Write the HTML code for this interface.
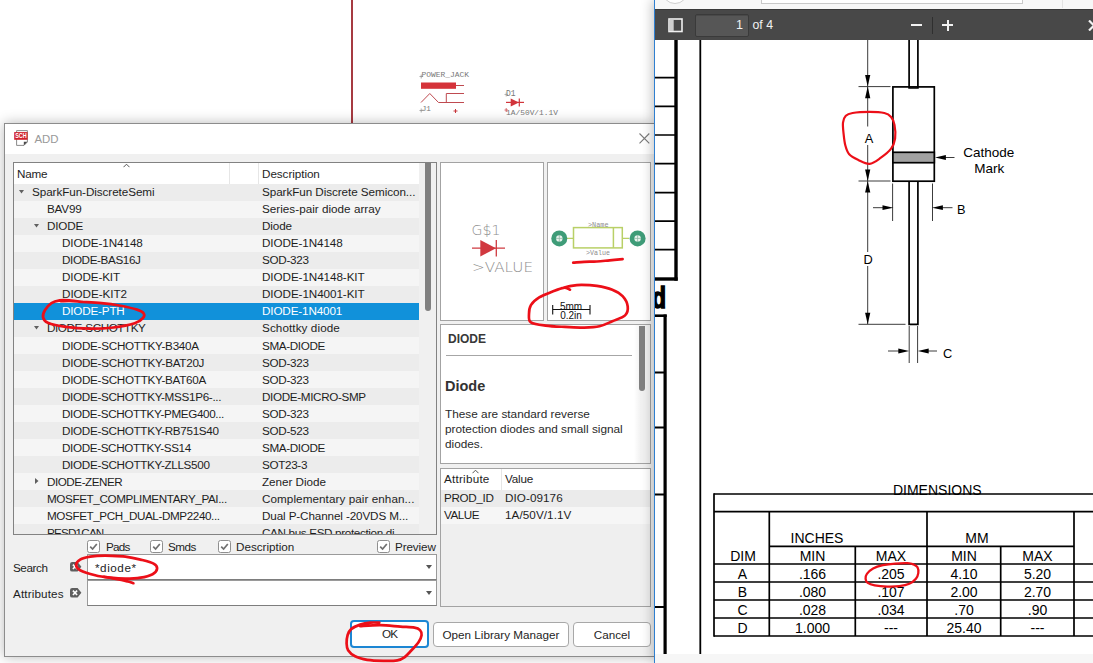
<!DOCTYPE html>
<html lang="en"><head><meta charset="utf-8"><title>ADD</title>
<style>
html,body{margin:0;padding:0}
body{width:1093px;height:663px;overflow:hidden;position:relative;background:#fff;font-family:"Liberation Sans",sans-serif;font-size:11.7px;color:#1e1e1e}
.abs{position:absolute}
#sch{position:absolute;left:0;top:0;width:655px;height:663px;background:#fff}
#pdf{position:absolute;left:654px;top:0;width:439px;height:663px;background:#fff;border-left:1px solid #2f7fd0;box-shadow:-2px 0 11px rgba(0,0,0,.24);overflow:hidden}
#pdftop{position:absolute;left:0;top:0;width:439px;height:9px;background:#f7f7f7}
#pdfbar{position:absolute;left:0;top:9px;width:439px;height:31px;background:#484848;border-top:1px solid #3a3a3a;box-sizing:border-box;color:#f0f0f0;font-size:13px}
#pdfbot{position:absolute;left:0;top:654px;width:439px;height:9px;background:#f6f6f6}
#dlg{position:absolute;left:4px;top:123px;width:650px;height:534px;background:#f0f0f0;border:1px solid #8c8c8c;border-right:none;box-sizing:border-box;box-shadow:0 0 12px rgba(0,0,0,.28)}
#title{position:absolute;left:0;top:0;width:650px;height:30px;background:#fff}
#tree{position:absolute;left:8px;top:38px;width:424px;height:373px;border:1px solid #828282;box-sizing:border-box;background:#f0f0f0;overflow:hidden}
#thead{position:absolute;left:0;top:0;width:405px;height:21px;background:#fff}
.row{position:absolute;left:0;width:405px;height:17px;line-height:17px;white-space:nowrap}
.row.a{background:#ececec} .row.b{background:#f5f5f5}
.row.sel{background:#1191da;color:#fff}
.row span{position:absolute;top:0}
.row.u span{top:-1px}
.c2{left:248px}
.arw{position:absolute}
.box{position:absolute;background:#fff;border:1px solid #a3a3a3;box-sizing:border-box}
.cb{position:absolute;width:13px;height:13px;box-sizing:border-box;border:1px solid #8f8f8f;border-radius:2.5px;background:#fff}
.cb svg{position:absolute;left:1px;top:1px}
.lbl{position:absolute;white-space:nowrap;line-height:14px}
.inp{position:absolute;background:#fff;border:1px solid #9a9a9a;border-bottom-color:#7d7d7d;box-sizing:border-box}
.btn{position:absolute;box-sizing:border-box;background:#fff;border:1px solid #a8a8a8;border-radius:4px;text-align:center;line-height:23px;height:25px}
.clr{position:absolute;width:11px;height:10px;background:#5f5f5f;border-radius:2.5px}
.pt{position:absolute;font-family:"Liberation Sans",sans-serif;font-size:13px;color:#000;white-space:nowrap;line-height:14px}
</style></head><body>

<!-- ===== schematic editor background ===== -->
<div id="sch">
 <div class="abs" style="left:351px;top:0;width:2px;height:124px;background:#a63a41"></div>
 <svg class="abs" style="left:410px;top:62px" width="160" height="62" viewBox="410 62 160 62">
  <g font-family="'Liberation Mono',monospace" fill="#787878">
   <text x="421.5" y="77" font-size="7.9" textLength="47.5" lengthAdjust="spacingAndGlyphs">POWER_JACK</text>
   <text x="421.7" y="111" font-size="7.6">J1</text>
   <text x="506" y="95.6" font-size="8.2" textLength="9.6" lengthAdjust="spacingAndGlyphs">D1</text>
   <text x="506" y="114.7" font-size="7.9" textLength="52" lengthAdjust="spacingAndGlyphs">1A/50V/1.1V</text>
  </g>
  <rect x="421" y="82.5" width="35" height="6.3" fill="#d5333a"/>
  <g stroke="#bf4a50" stroke-width="1" fill="none">
   <path d="M456 85.5H464"/>
   <path d="M421 102.5L429.8 93.5L438.5 102.5H464"/>
   <path d="M464 93.5H446.3V102.5"/>
   <path d="M453.5 111H457.5M455.5 109V113" stroke="#c8373c"/>
   <path d="M419.5 110.5H423M421.2 108.5V112.5M419.5 76.5H423M421.2 74.5V78.5" stroke="#888" stroke-width=".7"/>
   <path d="M504.5 94.5H508M506.2 92.5V96.5" stroke="#999" stroke-width=".7"/>
   <path d="M504.5 110H508M506.2 108V112" stroke="#c8373c" stroke-width=".7"/>
  </g>
  <g stroke="#d1343b" stroke-width="1.2">
   <path d="M506 102.4H524"/>
   <path d="M519.3 98.4V106.4"/>
  </g>
  <path d="M510.7 98.4V106.4L519 102.4Z" fill="#d1343b"/>
 </svg>
</div>

<!-- ===== ADD dialog ===== -->
<div id="dlg">
 <div id="title">
  <svg class="abs" style="left:9px;top:6px" width="16" height="17" viewBox="0 0 16 17">
   <path d="M2.6 .6H13.4V12L10 15.4H2.6Z" fill="#fff" stroke="#7d7d7d" stroke-width=".9"/>
   <path d="M9.8 15.4L13.4 11.8H9.8Z" fill="#4a4a4a"/>
   <rect x="0.2" y="2.1" width="13.4" height="7.7" fill="#d0212b"/>
   <text x="6.9" y="8.4" font-family="'Liberation Sans',sans-serif" font-size="6.6" font-weight="bold" fill="#fff" text-anchor="middle" textLength="11.5" lengthAdjust="spacingAndGlyphs">SCH</text>
  </svg>
  <span class="lbl" style="left:29.5px;top:6.5px;font-size:11.4px;color:#999;line-height:16px">ADD</span>
  <svg class="abs" style="left:634px;top:9px" width="11" height="11" viewBox="0 0 11 11"><path d="M.5 .5L10.3 10.3M10.3 .5L.5 10.3" stroke="#7a7a7a" stroke-width="1.1" fill="none"/></svg>
 </div>

 <div id="tree">
  <div id="thead">
   <span class="lbl" style="left:3px;top:4px;letter-spacing:-0.197px">Name</span>
   <span class="lbl" style="left:248px;top:4px;letter-spacing:-0.061px">Description</span>
   <div class="abs" style="left:215px;top:0;width:1px;height:21px;background:#e6e6e6"></div>
   <div class="abs" style="left:244px;top:0;width:1px;height:21px;background:#e6e6e6"></div>
   <svg class="abs" style="left:109px;top:0px" width="7" height="5" viewBox="0 0 7 5"><path d="M.5 4.2L3.5 1.2L6.5 4.2" stroke="#555" stroke-width="1" fill="none"/></svg>
  </div>
<div class="row a u" style="top:21px"><svg class="arw" style="left:5px;top:6px" width="5" height="4" viewBox="0 0 5 4"><path d="M0 0H5L2.5 3.5Z" fill="#606060"/></svg><span class="c1" style="left:18px;letter-spacing:-0.074px">SparkFun-DiscreteSemi</span><span class="c2" style="letter-spacing:-0.066px">SparkFun Discrete Semicon...</span></div>
<div class="row b u" style="top:38px"><span class="c1" style="left:33px;letter-spacing:-0.206px">BAV99</span><span class="c2" style="letter-spacing:0.016px">Series-pair diode array</span></div>
<div class="row a u" style="top:55px"><svg class="arw" style="left:20px;top:6px" width="5" height="4" viewBox="0 0 5 4"><path d="M0 0H5L2.5 3.5Z" fill="#606060"/></svg><span class="c1" style="left:33px;letter-spacing:-0.183px">DIODE</span><span class="c2" style="letter-spacing:-0.129px">Diode</span></div>
<div class="row b u" style="top:72px"><span class="c1" style="left:48px;letter-spacing:-0.097px">DIODE-1N4148</span><span class="c2" style="letter-spacing:-0.105px">DIODE-1N4148</span></div>
<div class="row a u" style="top:89px"><span class="c1" style="left:48px;letter-spacing:-0.387px">DIODE-BAS16J</span><span class="c2" style="letter-spacing:-0.276px">SOD-323</span></div>
<div class="row b u" style="top:106px"><span class="c1" style="left:48px;letter-spacing:-0.122px">DIODE-KIT</span><span class="c2" style="letter-spacing:-0.083px">DIODE-1N4148-KIT</span></div>
<div class="row a u" style="top:123px"><span class="c1" style="left:48px;letter-spacing:-0.059px">DIODE-KIT2</span><span class="c2" style="letter-spacing:-0.083px">DIODE-1N4001-KIT</span></div>
<div class="row sel u" style="top:140px"><span class="c1" style="left:48px;letter-spacing:-0.187px">DIODE-PTH</span><span class="c2" style="letter-spacing:-0.147px">DIODE-1N4001</span></div>
<div class="row a u" style="top:157px"><svg class="arw" style="left:20px;top:6px" width="5" height="4" viewBox="0 0 5 4"><path d="M0 0H5L2.5 3.5Z" fill="#606060"/></svg><span class="c1" style="left:33px;letter-spacing:-0.439px">DIODE-SCHOTTKY</span><span class="c2" style="letter-spacing:0.088px">Schottky diode</span></div>
<div class="row b" style="top:174px"><span class="c1" style="left:48px;letter-spacing:-0.283px">DIODE-SCHOTTKY-B340A</span><span class="c2" style="letter-spacing:-0.359px">SMA-DIODE</span></div>
<div class="row a" style="top:191px"><span class="c1" style="left:48px;letter-spacing:-0.280px">DIODE-SCHOTTKY-BAT20J</span><span class="c2" style="letter-spacing:-0.276px">SOD-323</span></div>
<div class="row b" style="top:208px"><span class="c1" style="left:48px;letter-spacing:-0.287px">DIODE-SCHOTTKY-BAT60A</span><span class="c2" style="letter-spacing:-0.276px">SOD-323</span></div>
<div class="row a" style="top:225px"><span class="c1" style="left:48px;letter-spacing:-0.317px">DIODE-SCHOTTKY-MSS1P6-...</span><span class="c2" style="letter-spacing:-0.353px">DIODE-MICRO-SMP</span></div>
<div class="row b" style="top:242px"><span class="c1" style="left:48px;letter-spacing:-0.361px">DIODE-SCHOTTKY-PMEG400...</span><span class="c2" style="letter-spacing:-0.276px">SOD-323</span></div>
<div class="row a" style="top:259px"><span class="c1" style="left:48px;letter-spacing:-0.313px">DIODE-SCHOTTKY-RB751S40</span><span class="c2" style="letter-spacing:-0.276px">SOD-523</span></div>
<div class="row b" style="top:276px"><span class="c1" style="left:48px;letter-spacing:-0.376px">DIODE-SCHOTTKY-SS14</span><span class="c2" style="letter-spacing:-0.359px">SMA-DIODE</span></div>
<div class="row a" style="top:293px"><span class="c1" style="left:48px;letter-spacing:-0.327px">DIODE-SCHOTTKY-ZLLS500</span><span class="c2" style="letter-spacing:-0.332px">SOT23-3</span></div>
<div class="row b" style="top:310px"><svg class="arw" style="left:21px;top:5px" width="4" height="6" viewBox="0 0 4 6"><path d="M0 0V6L3.5 3Z" fill="#606060"/></svg><span class="c1" style="left:33px;letter-spacing:-0.476px">DIODE-ZENER</span><span class="c2" style="letter-spacing:-0.030px">Zener Diode</span></div>
<div class="row a" style="top:327px"><span class="c1" style="left:33px;letter-spacing:-0.388px">MOSFET_COMPLIMENTARY_PAI...</span><span class="c2" style="letter-spacing:0.066px">Complementary pair enhan...</span></div>
<div class="row b" style="top:344px"><span class="c1" style="left:33px;letter-spacing:-0.406px">MOSFET_PCH_DUAL-DMP2240...</span><span class="c2" style="letter-spacing:-0.123px">Dual P-Channel -20VDS M...</span></div>
<div class="row a" style="top:361px"><span class="c1" style="left:33px;letter-spacing:-0.814px">PESD1CAN</span><span class="c2" style="letter-spacing:-0.351px">CAN bus ESD protection di...</span></div>
  <div class="abs" style="left:411px;top:0;width:6px;height:148px;background:#808080;border-radius:0 0 3px 3px"></div>
 </div>

 <!-- previews -->
 <div class="box" style="left:435px;top:38px;width:104px;height:159px">
  <svg class="abs" style="left:0;top:0" width="102" height="157" viewBox="441 163 102 157">
   <g font-family="'DejaVu Sans Light','DejaVu Sans','Liberation Sans',sans-serif" font-weight="200" fill="#8e8e8e">
    <text x="471.5" y="234.7" font-size="14.6" textLength="29" lengthAdjust="spacingAndGlyphs">G$1</text>
    <text x="472" y="272.4" font-size="14.2" textLength="61" lengthAdjust="spacingAndGlyphs">&gt;VALUE</text>
   </g>
   <path d="M472 248.2H505M496.3 240V256.5" stroke="#cf3b41" stroke-width="1.3" fill="none"/>
   <path d="M480.3 240V256.5L496 248.2Z" fill="#d1383f"/>
  </svg>
 </div>
 <div class="box" style="left:542px;top:38px;width:103.5px;height:159px">
  <svg class="abs" style="left:0;top:0" width="102" height="157" viewBox="548 163 102 157">
   <path d="M567 238.4H573.5M622.3 238.4H629" stroke="#b9d067" stroke-width="1.4"/>
   <rect x="573.5" y="227.6" width="48.8" height="20.3" fill="none" stroke="#b9d067" stroke-width="1.5"/>
   <path d="M613.4 227.6V247.9" stroke="#b9d067" stroke-width="1.5"/>
   <circle cx="559.3" cy="238.4" r="8" fill="#3f9c78"/><circle cx="559.3" cy="238.4" r="3.2" fill="#e9f3ee"/>
   <path d="M555.8 238.4H562.8M559.3 234.9V241.9" stroke="#8fb7a5" stroke-width=".8"/>
   <circle cx="637.6" cy="238.4" r="8" fill="#3f9c78"/><circle cx="637.6" cy="238.4" r="3.2" fill="#e9f3ee"/>
   <path d="M634.1 238.4H641.1M637.6 234.9V241.9" stroke="#8fb7a5" stroke-width=".8"/>
   <g font-family="'Liberation Mono',monospace" fill="#8d8d8d">
    <text x="588" y="226.6" font-size="6.6" textLength="20.5" lengthAdjust="spacingAndGlyphs">&gt;Name</text>
    <text x="586" y="254.7" font-size="6.6" textLength="24" lengthAdjust="spacingAndGlyphs">&gt;Value</text>
   </g>
   <path d="M552.7 309.5H590M552.7 305V314.6M590 305V314.6" stroke="#111" stroke-width="1.1" fill="none"/>
   <g font-family="'Liberation Sans',sans-serif" fill="#111" font-size="10" text-anchor="middle">
    <text x="571" y="309.9">5mm</text>
    <text x="571" y="318.7">0.2in</text>
   </g>
  </svg>
 </div>

 <!-- description -->
 <div class="box" style="left:435px;top:200px;width:211px;height:140px;overflow:hidden">
  <div class="abs" style="left:193px;top:0;width:17px;height:138px;background:linear-gradient(90deg,#fff,#f1f1f1 40%,#f1f1f1)"></div>
  <div class="abs" style="left:198px;top:1px;width:6px;height:65px;background:#808080;border-radius:0 0 3px 3px"></div>
  <span class="lbl" style="left:7px;top:7px;font-weight:bold;font-size:12px;color:#383838">DIODE</span>
  <div class="abs" style="left:5px;top:30px;width:186px;height:1px;background:#a6a6a6"></div>
  <span class="lbl" style="left:4px;top:53px;font-weight:bold;font-size:14.5px;color:#333;line-height:16px">Diode</span>
  <div class="abs" style="left:4px;top:82px;width:190px;line-height:15px;font-size:11.8px;color:#2a2a2a">These are standard reverse<br>protection diodes and small signal<br>diodes.</div>
 </div>

 <!-- attributes -->
 <div class="box" style="left:435px;top:344px;width:211px;height:139px;background:#efefef;overflow:hidden">
  <div class="abs" style="left:0;top:0;width:210px;height:21px;background:#fff"></div>
  <div class="abs" style="left:60px;top:0;width:1px;height:21px;background:#e6e6e6"></div>
  <svg class="abs" style="left:31px;top:0px" width="7" height="5" viewBox="0 0 7 5"><path d="M.5 4.2L3.5 1.2L6.5 4.2" stroke="#555" stroke-width="1" fill="none"/></svg>
  <span class="lbl" style="left:3px;top:3px;letter-spacing:0.230px">Attribute</span>
  <span class="lbl" style="left:64px;top:3px;letter-spacing:-0.166px">Value</span>
  <div class="abs" style="left:0;top:21px;width:210px;height:17px;background:#ebebeb"></div>
  <div class="abs" style="left:0;top:38px;width:210px;height:17px;background:#f6f6f6"></div>
  <span class="lbl" style="left:3px;top:22px;letter-spacing:-0.353px">PROD_ID</span>
  <span class="lbl" style="left:64px;top:22px;letter-spacing:0.059px">DIO-09176</span>
  <span class="lbl" style="left:3px;top:39px;letter-spacing:-0.494px">VALUE</span>
  <span class="lbl" style="left:64px;top:39px;letter-spacing:0.069px">1A/50V/1.1V</span>
 </div>

 <!-- checkboxes -->
 <div class="cb" style="left:82px;top:416px"><svg width="9" height="9" viewBox="0 0 9 9"><path d="M1.2 4.6L3.6 7L7.8 2" stroke="#707070" stroke-width="1.7" fill="none"/></svg></div>
 <span class="lbl" style="left:101px;top:416px;letter-spacing:-0.735px">Pads</span>
 <div class="cb" style="left:145px;top:416px"><svg width="9" height="9" viewBox="0 0 9 9"><path d="M1.2 4.6L3.6 7L7.8 2" stroke="#707070" stroke-width="1.7" fill="none"/></svg></div>
 <span class="lbl" style="left:163px;top:416px;letter-spacing:-0.473px">Smds</span>
 <div class="cb" style="left:213px;top:416px"><svg width="9" height="9" viewBox="0 0 9 9"><path d="M1.2 4.6L3.6 7L7.8 2" stroke="#707070" stroke-width="1.7" fill="none"/></svg></div>
 <span class="lbl" style="left:231px;top:416px;letter-spacing:-0.015px">Description</span>
 <div class="cb" style="left:372px;top:416px"><svg width="9" height="9" viewBox="0 0 9 9"><path d="M1.2 4.6L3.6 7L7.8 2" stroke="#707070" stroke-width="1.7" fill="none"/></svg></div>
 <span class="lbl" style="left:390px;top:416px;letter-spacing:-0.125px">Preview</span>

 <!-- search / attributes -->
 <span class="lbl" style="left:8px;top:437px;letter-spacing:-0.424px">Search</span>
 <svg class="abs" style="left:65px;top:438px" width="12" height="10" viewBox="0 0 12 10"><path d="M2.2 0H7.6L11.4 4.7L7.6 9.6H2.2Q0 9.6 0 7.4V2.2Q0 0 2.2 0Z" fill="#5e5e5e"/><path d="M2.9 2.6L7.1 7M7.1 2.6L2.9 7" stroke="#fff" stroke-width="1.6"/></svg>
 <div class="inp" style="left:82px;top:430px;width:350px;height:26px">
  <span class="lbl" style="left:7px;top:6px;letter-spacing:0.557px">*diode*</span>
  <svg class="abs" style="left:338px;top:10px" width="6" height="4" viewBox="0 0 6 4"><path d="M0 0H6L3 4Z" fill="#555"/></svg>
 </div>
 <span class="lbl" style="left:8px;top:463px;letter-spacing:0.133px">Attributes</span>
 <svg class="abs" style="left:65px;top:464px" width="12" height="10" viewBox="0 0 12 10"><path d="M2.2 0H7.6L11.4 4.7L7.6 9.6H2.2Q0 9.6 0 7.4V2.2Q0 0 2.2 0Z" fill="#5e5e5e"/><path d="M2.9 2.6L7.1 7M7.1 2.6L2.9 7" stroke="#fff" stroke-width="1.6"/></svg>
 <div class="inp" style="left:82px;top:456px;width:350px;height:26px">
  <svg class="abs" style="left:338px;top:10px" width="6" height="4" viewBox="0 0 6 4"><path d="M0 0H6L3 4Z" fill="#555"/></svg>
 </div>

 <!-- buttons -->
 <div class="btn" style="left:345px;top:496px;width:79px;height:27.5px;border:2px solid #1c86d3;line-height:23px;border-radius:4px"><span style="letter-spacing:-0.845px">OK</span></div>
 <div class="btn" style="left:428px;top:498px;width:136px">Open Library Manager</div>
 <div class="btn" style="left:568px;top:498px;width:78px">Cancel</div>
</div>

<!-- ===== PDF viewer window ===== -->
<div id="pdf">
 <div id="pdftop">
  <div class="abs" style="left:7px;top:-22px;width:26px;height:26px;border:1px solid #cfcfcf;border-radius:50%;box-sizing:border-box;background:#fff"></div>
  <div class="abs" style="left:106px;top:-10px;width:260px;height:12px;border:1px solid #c9c9c9;background:#fff"></div>
  <div class="abs" style="left:407px;top:0;width:1px;height:8px;background:#e3e3e3"></div>
 </div>
 <div id="pdfbar">
  <svg class="abs" style="left:13px;top:8px" width="15" height="15" viewBox="0 0 15 15"><rect x="1" y="1" width="13" height="12.5" fill="none" stroke="#f0f0f0" stroke-width="1.6"/><rect x="1.5" y="1.5" width="4.2" height="11.5" fill="#cfcfcf"/></svg>
  <div class="abs" style="left:40px;top:4px;width:54px;height:23px;box-sizing:border-box;border:1px solid #3a3a3a;background:#565656;border-radius:2px;box-shadow:inset 0 1px 0 rgba(0,0,0,.15)"></div>
  <span class="lbl" style="left:81px;top:8px;font-size:12.6px;color:#f2f2f2">1</span>
  <span class="lbl" style="left:97.5px;top:8px;font-size:12.3px;color:#f2f2f2">of 4</span>
  <div class="abs" style="left:256px;top:14px;width:11px;height:2px;background:#f2f2f2"></div>
  <div class="abs" style="left:277px;top:7px;width:1px;height:17px;background:#2f2f2f"></div>
  <div class="abs" style="left:287px;top:14px;width:11px;height:2px;background:#f2f2f2"></div>
  <div class="abs" style="left:291.5px;top:9.5px;width:2px;height:11px;background:#f2f2f2"></div>
  <svg class="abs" style="left:433px;top:10px" width="12" height="11" viewBox="0 0 12 11"><path d="M1 .5L11 10.5M11 .5L1 10.5" stroke="#f2f2f2" stroke-width="2.2" fill="none"/></svg>
 </div>

 <!-- page content -->
 <svg class="abs" style="left:0;top:40px" width="439" height="614" viewBox="655 40 439 614">
  <g stroke="#000" fill="none">
   <!-- left title-block ladder -->
   <path d="M676 40V280.7" stroke-width="3.4"/>
   <path d="M655 77.7H677M655 106.3H677M655 135H677M655 163.6H677M655 192.6H677M655 221.2H677M655 249.6H677" stroke-width="1.7"/>
   <path d="M655 279H677.7" stroke-width="3.4"/>
   <path d="M655 315.7H666.7" stroke-width="2.6"/>
   <path d="M665.1 314.4V654" stroke-width="3.2"/>
   <path d="M655 372.5H666M655 427.5H666M655 494.5H666M655 607H666" stroke-width="2"/>
   <path d="M700.3 40V654" stroke-width="1.8"/>
  </g>
  <text transform="translate(652.1,308) scale(0.78,1)" font-family="'Liberation Sans',sans-serif" font-weight="bold" font-size="29.4" fill="#000" stroke="#000" stroke-width="1.5">d</text>

  <!-- diode drawing -->
  <g stroke="#000" fill="none" stroke-width="1.7">
   <path d="M909.1 40V88H917.9V40"/>
   <rect x="892.9" y="86.9" width="41.4" height="94.3" fill="none"/>
   <rect x="892.9" y="152.3" width="41.4" height="10.4" fill="#a2a2a2"/>
   <path d="M909.1 181.2V324.3H917.9V181.2"/>
  </g>
  <g stroke="#3c3c3c" fill="none" stroke-width="1">
   <path d="M867.7 40V126.5M867.7 145V252M867.7 266V324"/>
   <path d="M858.5 86.6H890.5M858.5 181H890.5M858.5 324.3H905.5"/>
   <path d="M892.6 183.5V221M932.5 183.5V221"/>
   <path d="M873 207.7H884M942 207.7H952.5"/>
   <path d="M909.2 326V363M917.6 326V363"/>
   <path d="M888 351H900M927 351H937"/>
   <path d="M944 157.5H954.5"/>
  </g>
  <g fill="#000">
   <path d="M867.7 86.6L865.1 75H870.3Z"/><path d="M867.7 86.6L865.1 98.2H870.3Z"/>
   <path d="M867.7 181L865.1 169.4H870.3Z"/><path d="M867.7 181L865.1 192.6H870.3Z"/>
   <path d="M867.7 324.3L865.1 312.7H870.3Z"/>
   <path d="M893.4 207.7L882.5 205.3V210.1Z"/><path d="M932 207.7L942.9 205.3V210.1Z"/>
   <path d="M909.2 351L898.3 348.6V353.4Z"/><path d="M917.8 351L928.7 348.6V353.4Z"/>
   <path d="M935 157.5L945.9 155.1V159.9Z"/>
  </g>
  <g font-family="'Liberation Sans',sans-serif" fill="#000" font-size="12.8" text-anchor="middle">
   <text x="868.9" y="142.8">A</text>
   <text x="868" y="263.8">D</text>
   <text x="961.2" y="214.1">B</text>
   <text x="947.5" y="358.4">C</text>
  </g>
  <g font-family="'Liberation Sans',sans-serif" fill="#000" font-size="13.5" text-anchor="middle">
   <text x="988.7" y="157.3">Cathode</text>
   <text x="989.2" y="173.2">Mark</text>
  </g>

  <!-- dimensions table -->
  <text x="937.3" y="494.6" font-family="'Liberation Sans',sans-serif" fill="#000" font-size="14" text-anchor="middle">DIMENSIONS</text>
  <g stroke="#000" fill="none" stroke-width="1.7">
   <path d="M714 494H1094M714 511.7H1094"/>
   <path d="M714 493.2V636.8"/>
   <path d="M769.3 511.7V636M855.3 546.3V636M927 511.7V636M1000.7 546.3V636M1074 511.7V636"/>
   <path d="M769.3 546.3H1074"/>
   <path d="M714 564H1094M714 582H1094M714 600H1094M714 618H1094M714 636H1094"/>
  </g>
  <g font-family="'Liberation Sans',sans-serif" fill="#000" font-size="14" text-anchor="middle">
   <text x="817" y="542.9">INCHES</text><text x="977" y="542.9">MM</text>
   <text x="743" y="560.9">DIM</text><text x="812.5" y="560.9">MIN</text><text x="891" y="560.9">MAX</text><text x="964" y="560.9">MIN</text><text x="1037.5" y="560.9">MAX</text>
   <text x="742.5" y="578.9">A</text><text x="812.5" y="578.9">.166</text><text x="891" y="578.9">.205</text><text x="964" y="578.9">4.10</text><text x="1037.5" y="578.9">5.20</text>
   <text x="742.5" y="596.9">B</text><text x="812.5" y="596.9">.080</text><text x="891" y="596.9">.107</text><text x="964" y="596.9">2.00</text><text x="1037.5" y="596.9">2.70</text>
   <text x="742.5" y="614.9">C</text><text x="812.5" y="614.9">.028</text><text x="891" y="614.9">.034</text><text x="964" y="614.9">.70</text><text x="1037.5" y="614.9">.90</text>
   <text x="742.5" y="632.9">D</text><text x="812.5" y="632.9">1.000</text><text x="891" y="632.9">---</text><text x="964" y="632.9">25.40</text><text x="1037.5" y="632.9">---</text>
  </g>
 </svg>
 <div id="pdfbot"></div>
</div>

<!-- ===== red pen annotations ===== -->
<svg class="abs" style="left:0;top:0;pointer-events:none" width="1093" height="663" viewBox="0 0 1093 663">
 <g fill="none" stroke="#ec0f18" stroke-width="2.7" stroke-linecap="round" stroke-linejoin="round">
  <path d="M82.3 301.9C80.1 301.6 73.0 300.6 69.2 300.3C65.4 300.0 62.7 299.8 59.7 300.3C56.7 300.8 53.9 301.5 51.4 303.1C48.9 304.8 46.3 307.8 44.9 310.2C43.5 312.6 42.6 315.3 43.1 317.4C43.6 319.5 44.0 321.1 47.8 322.7C51.6 324.3 58.8 325.9 65.7 326.9C72.7 327.9 81.6 328.6 89.5 328.7C97.4 328.8 105.8 328.4 113.3 327.5C120.8 326.6 129.8 324.9 134.7 323.3C139.6 321.7 141.5 319.7 143.0 318.0C144.5 316.3 144.6 314.6 143.6 313.2C142.6 311.8 141.1 310.9 137.0 309.6C132.9 308.3 125.1 306.6 119.2 305.5C113.3 304.4 107.6 303.7 101.4 303.1C95.2 302.5 87.5 302.2 82.3 301.9C77.1 301.5 73.5 301.1 70.0 301.0C66.5 300.9 62.5 301.2 61.0 301.2"/>
  <path d="M125.4 556.6C122.1 556.4 111.2 555.6 105.3 555.6C99.4 555.6 94.4 555.9 90.2 556.6C86.0 557.3 82.4 558.2 80.1 559.6C77.8 561.0 76.1 563.3 76.1 565.1C76.1 566.9 76.9 568.5 80.1 570.2C83.3 571.9 90.2 574.0 95.2 575.2C100.2 576.5 105.3 577.1 110.3 577.7C115.3 578.3 120.4 578.7 125.4 578.7C130.4 578.7 136.0 578.5 140.5 577.7C145.0 577.0 149.8 575.7 152.6 574.2C155.4 572.7 156.9 570.5 157.1 568.7C157.3 566.9 156.4 565.1 153.6 563.6C150.8 562.1 145.2 560.8 140.5 559.6C135.8 558.4 130.2 557.2 125.4 556.6C120.7 556.0 114.2 555.9 112.0 555.8"/>
  <path d="M104.0 576.8C105.5 577.1 110.1 577.9 113.0 578.4C115.9 578.9 118.9 579.4 121.4 579.9C123.9 580.4 126.0 581.0 128.0 581.5C130.0 582.0 132.5 582.9 133.4 583.2"/>
  <path d="M379.3 622.6C377.8 622.6 373.4 622.3 370.2 622.6C367.0 622.9 363.4 623.5 360.2 624.6C357.0 625.7 353.2 627.3 351.1 629.1C349.0 630.9 348.4 632.9 347.6 635.2C346.9 637.6 346.5 640.7 346.6 643.2C346.7 645.7 346.7 648.1 348.1 650.3C349.5 652.5 351.9 654.7 355.1 656.3C358.3 657.9 362.5 659.0 367.2 659.8C371.9 660.5 378.3 660.7 383.3 660.8C388.3 660.9 393.9 660.9 397.4 660.3C400.9 659.7 402.0 659.0 404.4 657.3C406.8 655.6 409.1 652.8 411.5 650.3C413.9 647.8 416.8 644.7 418.5 642.2C420.2 639.7 421.4 637.2 421.6 635.2C421.9 633.2 421.2 631.4 420.0 630.1C418.8 628.8 417.8 628.2 414.5 627.6C411.2 627.0 406.1 627.0 400.4 626.6C394.7 626.2 387.0 625.2 380.3 625.1C373.6 625.0 363.6 625.9 360.2 626.1"/>
  <path d="M570.0 289.7C568.9 289.4 566.6 287.5 563.6 287.8C560.6 288.1 556.2 290.1 552.1 291.7C548.0 293.3 542.7 295.2 539.2 297.4C535.7 299.6 532.6 302.3 530.9 305.1C529.2 307.9 529.0 311.2 529.0 314.1C529.0 317.0 528.1 320.5 530.9 322.4C533.7 324.3 539.9 324.9 545.6 325.6C551.3 326.4 558.5 326.6 564.9 326.9C571.3 327.2 578.3 327.7 584.1 327.6C589.9 327.5 594.8 327.4 599.5 326.3C604.2 325.2 608.0 323.0 612.3 321.2C616.6 319.4 622.5 317.9 625.1 315.4C627.7 312.9 628.1 309.6 627.7 306.4C627.3 303.2 625.2 299.0 622.6 296.2C620.0 293.4 616.6 291.4 612.3 289.7C608.0 288.0 602.0 286.7 596.9 285.9C591.8 285.1 585.8 284.9 581.5 284.9C577.2 284.9 574.3 285.4 571.3 285.9C568.3 286.4 564.9 287.5 563.6 287.8"/>
  <path d="M573.2 262.6C575.0 262.5 580.2 262.0 584.1 261.8C588.0 261.6 592.6 261.8 596.9 261.5C601.2 261.2 605.4 260.7 609.7 260.3C614.0 259.9 620.5 259.4 622.6 259.2"/>
  <path d="M869.6 111.9C864.3 111.9 856.6 112.3 852.6 113.0C848.6 113.7 847.4 114.2 845.8 115.8C844.2 117.4 843.4 119.6 843.0 122.6C842.6 125.6 843.2 130.1 843.6 133.9C844.0 137.7 844.4 141.9 845.3 145.3C846.2 148.7 847.0 151.9 849.2 154.3C851.4 156.8 854.9 158.4 858.3 160.0C861.7 161.6 865.8 164.3 869.6 163.9C873.4 163.5 877.3 160.2 880.9 157.7C884.5 155.2 888.7 151.9 891.1 148.7C893.5 145.5 894.5 142.5 895.1 138.5C895.7 134.5 895.2 128.5 894.5 124.9C893.8 121.3 892.8 119.0 891.1 117.0C889.4 115.0 887.9 113.8 884.3 113.0C880.7 112.2 874.9 111.9 869.6 111.9" stroke-width="2.2"/>
  <path d="M907.6 563.2C904.6 563.1 899.4 563.3 895.3 563.6C891.2 563.9 886.6 564.4 882.9 565.2C879.2 566.0 875.8 567.0 873.1 568.5C870.4 570.0 868.1 572.2 866.9 573.9C865.6 575.6 865.5 577.3 865.6 578.8C865.7 580.3 866.2 581.8 867.7 582.9C869.2 584.0 871.5 584.8 874.7 585.4C877.9 586.0 883.0 586.5 887.1 586.6C891.2 586.7 895.7 586.7 899.4 586.2C903.1 585.7 906.5 585.0 909.3 583.8C912.0 582.6 914.4 580.6 915.9 578.8C917.4 577.0 918.0 575.0 918.3 573.1C918.6 571.2 918.3 568.8 917.5 567.3C916.7 565.8 915.0 565.1 913.4 564.4C911.8 563.7 910.6 563.3 907.6 563.2" stroke-width="2.3"/>
 </g>
</svg>
</body></html>
